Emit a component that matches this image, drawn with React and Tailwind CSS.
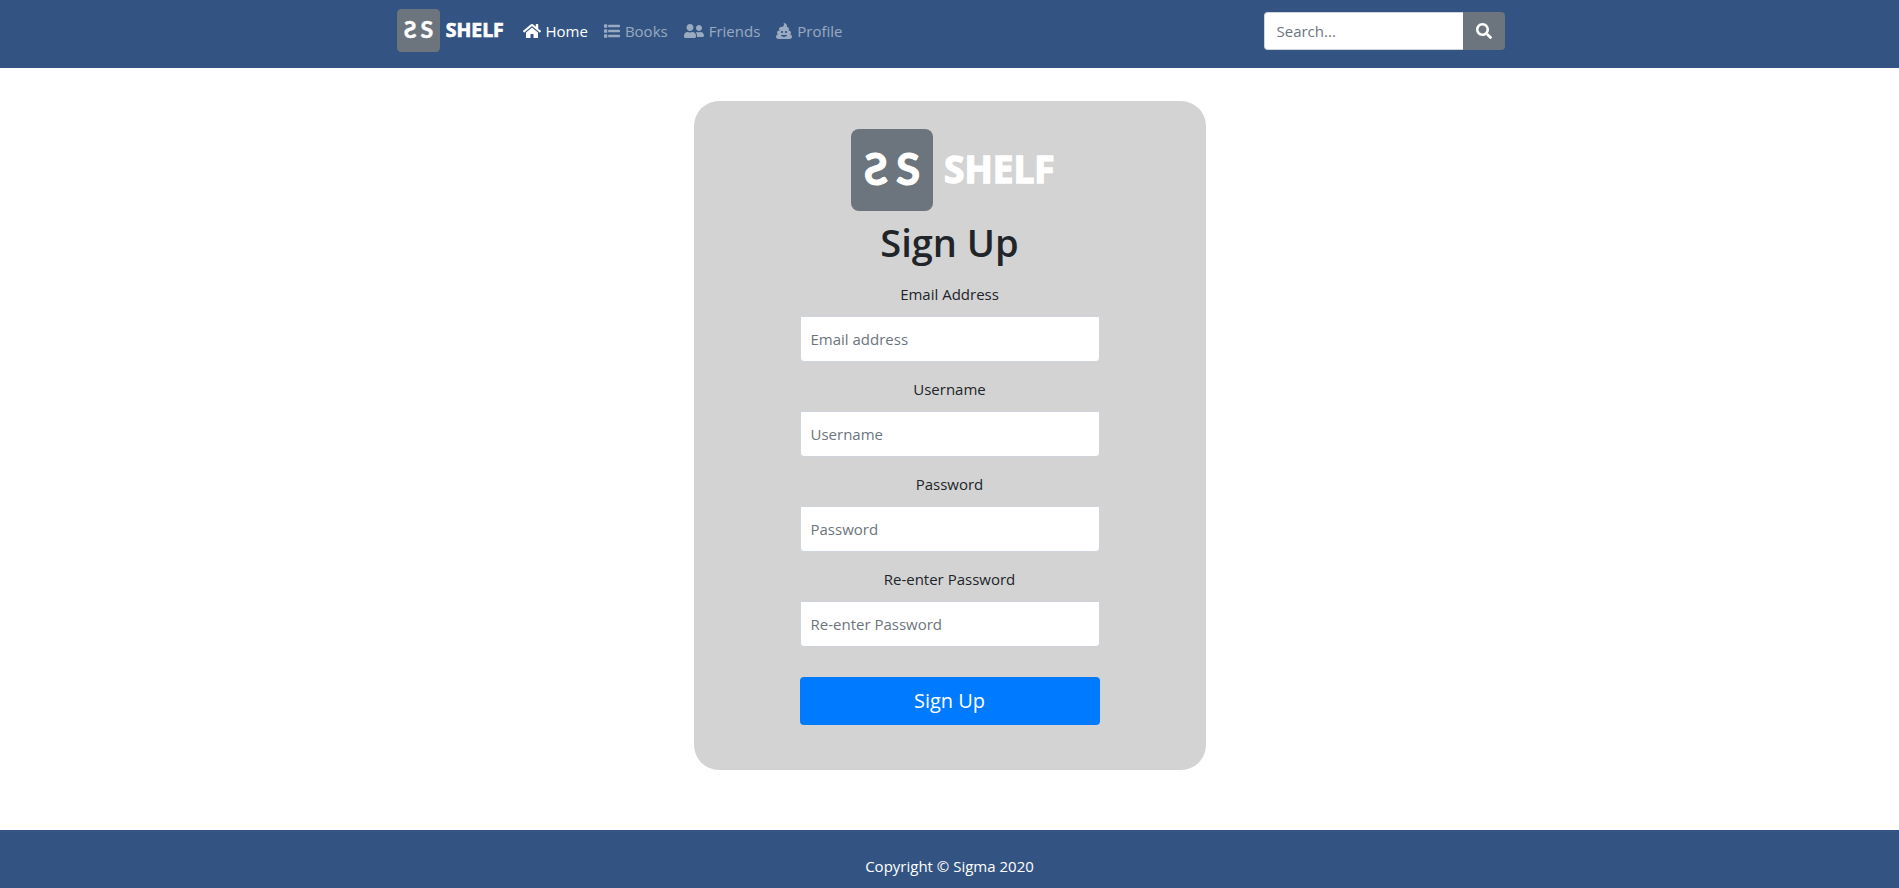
import { FaHome, FaUserFriends, FaPoo, FaSearch } from 'react-icons/fa';

function ListIcon({ className }) {
  return (
    <svg viewBox="0 0 512 512" className={className} fill="currentColor" aria-hidden="true">
      {[40, 200, 360].map((y) => (
        <g key={y}>
          <rect x="0" y={y} width="104" height="112" rx="20" />
          <rect x="132" y={y + 18} width="380" height="76" rx="14" />
        </g>
      ))}
    </svg>
  );
}

const links = [
  { label: 'Home', Icon: FaHome, size: 'w-[18px]', active: true },
  { label: 'Books', Icon: ListIcon, size: 'w-4' },
  { label: 'Friends', Icon: FaUserFriends, size: 'w-5' },
  { label: 'Profile', Icon: FaPoo, size: 'w-4' },
];

const fields = [
  { id: 'email', label: 'Email Address', placeholder: 'Email address', type: 'email' },
  { id: 'username', label: 'Username', placeholder: 'Username', type: 'text' },
  { id: 'password', label: 'Password', placeholder: 'Password', type: 'password' },
  { id: 'confirm', label: 'Re-enter Password', placeholder: 'Re-enter Password', type: 'password' },
];

function Logo({ className }) {
  return (
    <svg viewBox="0 0 204 82" className={className} role="img" aria-label="SS Shelf" fill="#fff">
      <rect width="82" height="82" rx="8" fill="#6c757d" />
      <g fontFamily="Lato, sans-serif" fontWeight="700" fontSize="44" stroke="#fff" strokeWidth="1" textAnchor="middle">
        <text x="-25" y="55.5" transform="scale(-1 1)">S</text>
        <text x="57" y="55.5">S</text>
      </g>
      <text
        x="93"
        y="54"
        fontFamily="'Open Sans', sans-serif"
        fontWeight="700"
        fontSize="37"
        stroke="#fff"
        strokeWidth="1.4"
      >
        SHELF
      </text>
    </svg>
  );
}

export default function App() {
  return (
    <div className="flex min-h-screen flex-col bg-white font-['Open_Sans',sans-serif] text-[15px] leading-6 text-[#212529]">
      <header className="bg-[#335482]">
        <div className="mx-auto flex h-[68px] w-full max-w-[1110px] items-start justify-between">
          <div className="flex items-start">
            <a href="#" className="ml-[2px] pt-[9px]">
              <Logo className="h-[43px] w-[107px]" />
            </a>
            <nav className="ml-[19px] flex gap-4 pt-[19px]">
              {links.map(({ label, Icon, size, active }) => (
                <a
                  key={label}
                  href="#"
                  className={`flex items-center gap-[5px] ${active ? 'text-white' : 'text-white/50'}`}
                >
                  <Icon className={`h-4 ${size}`} />
                  {label}
                </a>
              ))}
            </nav>
          </div>
          <form className="flex pt-3" onSubmit={(e) => e.preventDefault()}>
            <input
              type="search"
              aria-label="Search"
              placeholder="Search..."
              className="h-[38px] w-[199px] rounded-l border border-r-0 border-[#ced4da] bg-white px-3 outline-none placeholder:text-[#6c757d]"
            />
            <button
              type="submit"
              aria-label="Search"
              className="flex h-[38px] w-[42px] items-center justify-center rounded-r bg-[#6c757d] text-white"
            >
              <FaSearch className="size-4" />
            </button>
          </form>
        </div>
      </header>

      <main className="flex grow flex-col items-center pt-[33px] pb-[60px]">
        <form
          onSubmit={(e) => e.preventDefault()}
          className="flex w-full max-w-[512px] flex-col items-center rounded-[25px] bg-[#d3d3d3] pt-7 pb-[45px]"
        >
          <Logo className="ml-[6px] h-[82px] w-[204px]" />
          <h1 className="mt-[7px] mb-4 text-[38px] leading-[48px] font-semibold">Sign Up</h1>
          <div className="flex w-[300px] flex-col">
            {fields.map((f) => (
              <div key={f.id} className="mb-[15px] flex flex-col gap-[10px]">
                <label htmlFor={f.id} className="text-center">
                  {f.label}
                </label>
                <input
                  id={f.id}
                  type={f.type}
                  placeholder={f.placeholder}
                  className="h-[46px] w-full rounded-b border border-[#ced4da] bg-white px-[10px] outline-none placeholder:text-[#6c757d]"
                />
              </div>
            ))}
            <button type="submit" className="mt-[15px] h-12 rounded bg-[#007bff] text-xl text-white">
              Sign Up
            </button>
          </div>
        </form>
      </main>

      <footer className="bg-[#335482] pt-6 pb-[10px] text-center text-white">
        <p>Copyright © Sigma 2020</p>
      </footer>
    </div>
  );
}
